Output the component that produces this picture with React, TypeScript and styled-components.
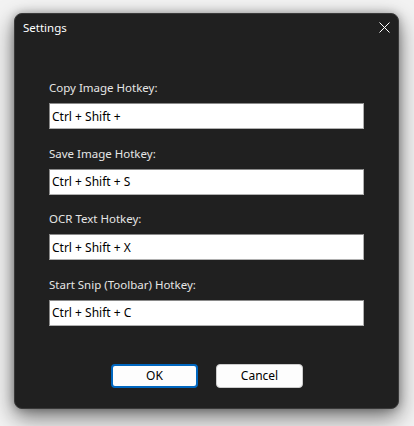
import * as React from 'react';
import styled, { createGlobalStyle } from 'styled-components';

const GlobalStyle = createGlobalStyle`
  html, body {
    margin: 0;
    padding: 0;
    background: #f3f3f3;
  }
  body {
    font-family: "Segoe UI", "Noto Sans", "Open Sans", sans-serif;
  }
`;

const Page = styled.div`
  width: 414px;
  height: 426px;
  box-sizing: border-box;
  padding: 13px 15px 0 14px;
  overflow: hidden;
`;

const DialogWindow = styled.div`
  width: 385px;
  height: 396px;
  box-sizing: border-box;
  background: #202020;
  border: 1px solid #3a3a3a;
  border-radius: 8px;
  box-shadow: 0 8px 22px rgba(0, 0, 0, 0.55), 0 0 8px rgba(0, 0, 0, 0.25);
  display: flex;
  flex-direction: column;
`;

const TitleBar = styled.div`
  height: 26px;
  display: flex;
  align-items: center;
  justify-content: space-between;
  padding: 0 4px 0 8px;
`;

const Title = styled.span`
  color: #ffffff;
  font-size: 11.5px;
`;

const CloseButton = styled.button`
  width: 20px;
  height: 20px;
  padding: 0;
  border: none;
  background: transparent;
  display: flex;
  align-items: center;
  justify-content: center;
  cursor: pointer;
`;

const Form = styled.div`
  display: flex;
  flex-direction: column;
  gap: 16.5px;
  padding: 40px 34px 0 34px;
`;

const Field = styled.div`
  display: flex;
  flex-direction: column;
  gap: 7px;
`;

const Label = styled.label`
  color: #e6e6e6;
  font-size: 11.5px;
  line-height: 16px;
`;

const HotkeyInput = styled.input`
  width: 315px;
  height: 26px;
  box-sizing: border-box;
  margin: 0;
  border: 1px solid #8a8a8a;
  border-right-color: #b0b0b0;
  border-bottom-color: #b0b0b0;
  background: #ffffff;
  color: #000000;
  font-family: inherit;
  font-size: 12px;
  padding: 0 2px;
  outline: none;
`;

const ButtonRow = styled.div`
  display: flex;
  justify-content: center;
  gap: 18px;
  margin-top: 38px;
  padding-left: 1px;
`;

const DialogButton = styled.button<{ $primary?: boolean }>`
  width: 87px;
  height: 24px;
  box-sizing: border-box;
  background: #fdfdfd;
  color: #000000;
  font-family: inherit;
  font-size: 12px;
  border-radius: 4px;
  border: ${(p) => (p.$primary ? '2px solid #0067c0' : '1px solid #cccccc')};
  padding: 0;
  cursor: pointer;
`;

const fields = [
  { label: 'Copy Image Hotkey:', value: 'Ctrl + Shift +' },
  { label: 'Save Image Hotkey:', value: 'Ctrl + Shift + S' },
  { label: 'OCR Text Hotkey:', value: 'Ctrl + Shift + X' },
  { label: 'Start Snip (Toolbar) Hotkey:', value: 'Ctrl + Shift + C' },
];

export default function App() {
  return (
    <>
      <GlobalStyle />
      <Page>
        <DialogWindow>
          <TitleBar>
            <Title>Settings</Title>
            <CloseButton aria-label="Close">
              <svg width="11" height="11" viewBox="0 0 11 11">
                <path d="M0.5 0.5 L10.5 10.5 M10.5 0.5 L0.5 10.5" stroke="#ffffff" strokeWidth="1" />
              </svg>
            </CloseButton>
          </TitleBar>
          <Form>
            {fields.map((f) => (
              <Field key={f.label}>
                <Label>{f.label}</Label>
                <HotkeyInput defaultValue={f.value} readOnly />
              </Field>
            ))}
          </Form>
          <ButtonRow>
            <DialogButton $primary>OK</DialogButton>
            <DialogButton>Cancel</DialogButton>
          </ButtonRow>
        </DialogWindow>
      </Page>
    </>
  );
}
